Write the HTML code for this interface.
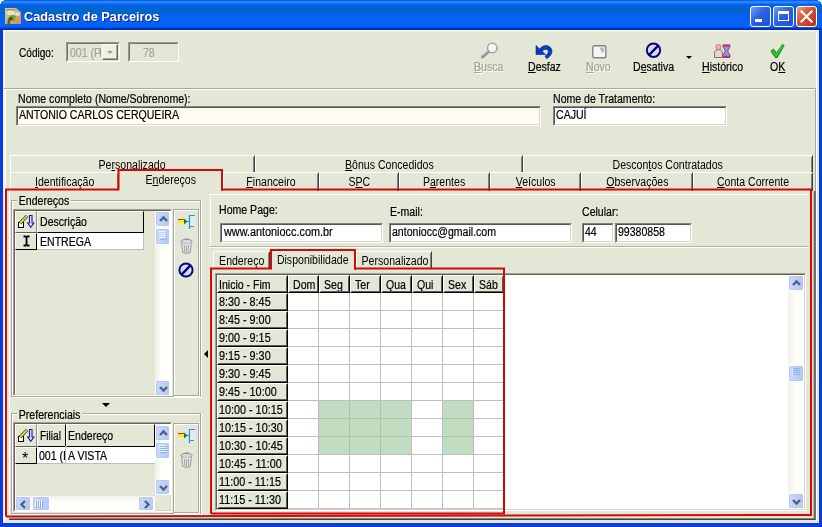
<!DOCTYPE html>
<html lang="pt-BR">
<head>
<meta charset="utf-8">
<title>Cadastro de Parceiros</title>
<style>
html,body{margin:0;padding:0;}
body{width:822px;height:527px;overflow:hidden;position:relative;background:#E5E7D6;
 font-family:"Liberation Sans",sans-serif;font-size:12px;color:#000;}
.a{position:absolute;}
.t{position:absolute;white-space:nowrap;-webkit-text-stroke:.2px currentColor;line-height:14px;height:14px;transform:scaleX(.88);transform-origin:0 0;}
u{text-decoration:underline;text-underline-offset:1px;text-decoration-thickness:1px;}
/* window chrome */
#title{left:0;top:0;width:822px;height:30px;
 background:linear-gradient(#0050DC 0,#1A74F4 1px,#3290FF 2px,#2080FA 3px,#0A62F0 4px,#0660EC 6px,#0066CC 7.5px,#0064C8 12.5px,#0560F0 14.5px,#0662F8 20px,#0660F8 27px,#0038C0 28.5px,#0028A8 30px);}
#title .cap{left:24px;top:8px;font:bold 13.5px "Liberation Sans",sans-serif;color:#fff;-webkit-text-stroke:0;
 text-shadow:1px 1px 0 #0A2A80;line-height:17px;height:17px;transform:scaleX(.945);}
.bl{background:#0A3CD8;}
.wb{top:6px;width:21px;height:21px;border-radius:3px;border:1px solid #fff;box-sizing:border-box;
 background:linear-gradient(135deg,#6C9CF4 0,#2C62E4 45%,#1E4FD0 100%);}
#wclose{background:linear-gradient(135deg,#F0A080 0,#D8502C 45%,#B83010 100%);}
/* inputs */
.in{position:absolute;box-sizing:border-box;background:#fff;border:1px solid;border-color:#848284 #fff #fff #848284;}
.in:before{content:"";position:absolute;left:0;top:0;right:0;bottom:0;border:1px solid;border-color:#55554E #D8D6C8 #D8D6C8 #55554E;}
.in .t{left:2px;top:1px;}
.dis .t{top:3px;}
.dis{background:#E5E7D6;color:#A5A594;border-color:#98978A #fff #fff #98978A;}
.dis:before{border-color:#77766A #E4E2D4 #E4E2D4 #77766A;}
.gray{color:#A5A294;text-shadow:1px 1px 0 #fff;}
/* tabs */
.tab{position:absolute;box-sizing:border-box;height:18px;border-left:1px solid #fff;border-top:1px solid #fff;border-right:1px solid #424142;text-align:center;line-height:14px;white-space:nowrap;}
.tab:after{content:"";position:absolute;right:0;top:1px;bottom:0;width:1px;background:#848284;}
.tab span{display:inline-block;transform:scaleX(.88);transform-origin:50% 0;position:relative;top:2px;}
.hd{position:absolute;box-sizing:border-box;background:#E5E7D6;border:1px solid;border-color:#fff #000 #000 #fff;white-space:nowrap;overflow:hidden;}
.hd:after{content:"";position:absolute;left:0;top:0;right:0;bottom:0;border:1px solid;border-color:transparent #5F5D54 #5F5D54 transparent;}
.hd .t{left:3px;top:2px;}
.hf{position:absolute;box-sizing:border-box;background:#E5E7D6;border:1px solid;border-color:#fff #000 #000 #fff;white-space:nowrap;overflow:hidden;}
.hf .t{left:3px;top:2px;}
.hi{border-right-color:#8E8E80;border-bottom-color:#5E5E52;}
.sb{position:absolute;background:linear-gradient(90deg,#F1F0E8,#FDFDFA 40%,#FEFEFC);}
.sbtn{position:absolute;box-sizing:border-box;width:16px;height:16px;border:1px solid #fff;border-radius:2px;background:linear-gradient(90deg,#CBD9FC,#B4C8F5);box-shadow:0 0 0 1px #B8C8EE inset;}
.grp{position:absolute;box-sizing:border-box;border:1px solid #ACA899;box-shadow:1px 1px 0 #fff, inset 1px 1px 0 #fff;}
.gl{background:#E5E7D6;padding:0 2px;}
.sunk{position:absolute;box-sizing:border-box;border:1px solid;border-color:#A09F90 #fff #fff #A09F90;}
.sunk:before{content:"";position:absolute;left:0;top:0;right:0;bottom:0;border:1px solid;border-color:#65645A #D8D6C8 #D8D6C8 #65645A;}
.ras{position:absolute;box-sizing:border-box;border:1px solid;border-color:#fff #ACA899 #ACA899 #fff;}

.chev{position:absolute;left:0;top:0;}
svg{overflow:visible;}
</style>
</head>
<body>
<!-- title bar -->
<div id="title" class="a">
 <svg class="a" style="left:5px;top:8px" width="16" height="16" viewBox="0 0 16 16"><defs><linearGradient id="ig" x1="0" y1="0" x2="1" y2="1"><stop offset="0" stop-color="#D9D2B4"/><stop offset=".55" stop-color="#BFAE78"/><stop offset="1" stop-color="#C88E50"/></linearGradient></defs><path d="M0 0 H11 L16 4 V16 H0 Z" fill="url(#ig)"/><rect x="1" y="1" width="9" height="1.5" fill="#A87860" opacity=".7"/><ellipse cx="6" cy="5" rx="4" ry="2.4" fill="#EEE8D4" opacity=".9"/><ellipse cx="12.5" cy="6" rx="2.6" ry="2" fill="#E8E4E0" opacity=".85"/><ellipse cx="7.5" cy="10" rx="3.6" ry="3" fill="#6E9A48" opacity=".9"/><path d="M3 10 L5.5 11 L5 16 H2.5 Z" fill="#7A5A18"/><ellipse cx="6" cy="10.5" rx="1.6" ry="1.8" fill="#2F5A24"/><rect x="10" y="9" width="5.5" height="6" fill="#D49A5C" opacity=".8"/></svg>
 <div class="t cap">Cadastro de Parceiros</div>
 <div class="a wb" style="left:750px"><div class="a" style="left:4px;top:12px;width:7px;height:3px;background:#fff"></div></div>
 <div class="a wb" style="left:773px"><div class="a" style="left:4px;top:4px;width:11px;height:10px;box-sizing:border-box;border:1px solid #fff;border-top-width:3px"></div></div>
 <div class="a wb" id="wclose" style="left:796px"><svg class="a" style="left:0;top:0" width="19" height="19" viewBox="0 0 19 19"><path d="M4.5 4.5 L14.5 14.5 M14.5 4.5 L4.5 14.5" stroke="#fff" stroke-width="2.2" stroke-linecap="square"/></svg></div>
</div>
<div class="a bl" style="left:0;top:30px;width:3px;height:497px"></div>
<div class="a" style="left:3px;top:30px;width:1px;height:493px;background:#E4EEFF"></div><div class="a" style="left:4px;top:31px;width:1px;height:490px;background:#FFF8F6"></div><div class="a" style="left:3px;top:30px;width:816px;height:1px;background:#FBFBF4"></div><div class="a" style="left:4px;top:31px;width:814px;height:1px;background:#EEF0E4"></div>
<div class="a bl" style="left:819px;top:30px;width:3px;height:497px"></div>
<div class="a" style="left:816px;top:32px;width:1px;height:489px;background:#fff"></div><div class="a" style="left:817px;top:31px;width:2px;height:492px;background:#D8E9FC"></div>
<div class="a bl" style="left:0;top:523px;width:822px;height:4px"></div>

<div class="a" style="left:0;top:0;width:4px;height:1px;background:#E9F0FB"></div><div class="a" style="left:0;top:1px;width:2px;height:1px;background:#E9F0FB"></div><div class="a" style="left:0;top:2px;width:1px;height:2px;background:#E9F0FB"></div>
<div class="a" style="left:818px;top:0;width:4px;height:1px;background:#E9F0FB"></div><div class="a" style="left:820px;top:1px;width:2px;height:1px;background:#E9F0FB"></div><div class="a" style="left:821px;top:2px;width:1px;height:2px;background:#E9F0FB"></div>
<!-- toolbar -->
<div class="t" style="left:19px;top:46px;transform:scaleX(.84)">Código:</div>
<div class="in dis" style="left:66px;top:42px;width:54px;height:20px"><div class="t" style="left:3px">001 (P</div></div>
<div class="in dis" style="left:128px;top:42px;width:51px;height:20px"><div class="t" style="left:14px">78</div></div>

<div class="t gray" style="left:474px;top:60px"><u>B</u>usca</div>
<div class="t" style="left:528px;top:60px"><u>D</u>esfaz</div>
<div class="t gray" style="left:586px;top:60px"><u>N</u>ovo</div>
<div class="t" style="left:633px;top:60px">D<u>e</u>sativa</div>
<div class="t" style="left:702px;top:60px"><u>H</u>istórico</div>
<div class="t" style="left:770px;top:60px">O<u>K</u></div>

<!-- toolbar icons -->
<svg class="a" style="left:480px;top:42px" width="18" height="17" viewBox="0 0 18 17"><path d="M8.5 9.5 L2.5 15" stroke="#8C8C8C" stroke-width="3" stroke-linecap="round"/><path d="M8 9 L2.5 14" stroke="#C8C8C8" stroke-width="1"/><circle cx="12.3" cy="6" r="4.8" fill="#F4F4F4" stroke="#9A9A9A" stroke-width="1.3"/><path d="M9.5 4.5 A3.3 3.3 0 0 1 13 2.8" stroke="#fff" stroke-width="1.2" fill="none"/></svg>
<svg class="a" style="left:535px;top:44px" width="18" height="16" viewBox="0 0 18 16"><path d="M1 1.5 L1 10.5 L10.5 10.5 L7.3 7.6 C8.5 5.6 11 4.6 12.6 6 C14 7.4 13.4 9.6 10 12.2 L11.6 14.8 C17 11.6 18.4 7 15.6 3.6 C12.6 0.2 7.4 1.2 4.6 4.9 Z" fill="#0A3CC0" stroke="#06288A" stroke-width=".6"/></svg>
<svg class="a" style="left:592px;top:45px" width="15" height="14" viewBox="0 0 15 14"><rect x=".8" y=".8" width="13" height="12" rx="1.5" fill="#F6F6F6" stroke="#848484" stroke-width="1.4"/><path d="M7.5 2.5 H12 V7 L10 8 Z" fill="#B8B8B8"/></svg>
<svg class="a" style="left:645px;top:42px" width="17" height="17" viewBox="0 0 17 17"><circle cx="8.5" cy="8.3" r="6.7" fill="#DADAF2" stroke="#06067E" stroke-width="2"/><path d="M4 13 L13 3.8" stroke="#06067E" stroke-width="2.4"/></svg>
<div class="a" style="left:686px;top:56px;width:0;height:0;border-left:3px solid transparent;border-right:3px solid transparent;border-top:3px solid #000"></div>
<svg class="a" style="left:714px;top:44px" width="17" height="15" viewBox="0 0 17 15"><circle cx="4.5" cy="3" r="2.6" fill="#F0B8A8" stroke="#C06878" stroke-width=".8"/><path d="M.6 13.5 V9 C.6 6.4 2.4 5.6 4.5 5.6 C6.6 5.6 8.4 6.4 8.4 9 V13.5 Z" fill="#CFE6C6" stroke="#B83C78" stroke-width=".9"/><path d="M9 1 H16 V3 L13.6 7 L16 11 V13.5 H9 V11 L11.4 7 L9 3 Z" fill="#7C9CE8" stroke="#B03070" stroke-width=".9"/><rect x="9" y=".6" width="7" height="2" fill="#C0306C"/><rect x="9" y="11.8" width="7" height="2" fill="#C0306C"/></svg>
<svg class="a" style="left:770px;top:44px" width="15" height="14" viewBox="0 0 15 14"><path d="M.8 7 L3.6 5 L6.4 9 L12.4 .4 L14.2 1.6 L7.2 13.8 L5.4 13.8 Z" fill="#22A822" stroke="#138013" stroke-width=".7"/><path d="M2.6 6.8 L6.2 11.4 L12.6 1.8" stroke="#58D858" stroke-width="1" fill="none"/></svg>
<!-- combo button -->
<div class="a" style="left:100px;top:48px;width:1px;height:9px;background:#A5A594"></div>
<div class="a" style="left:102px;top:44px;width:16px;height:16px;box-sizing:border-box;background:#EEF0E4;border:1px solid;border-color:#fff #6E6C5C #6E6C5C #fff;box-shadow:inset -1px -1px 0 #ACA899"></div>
<div class="a" style="left:107px;top:51px;width:0;height:0;border-left:3px solid transparent;border-right:3px solid transparent;border-top:3px solid #A0A090"></div>
<!-- main panel -->
<div class="a" style="left:4px;top:88px;width:812px;height:1px;background:#ACA899"></div>
<div class="a" style="left:5px;top:89px;width:811px;height:1px;background:#fff"></div>
<div class="a" style="left:5px;top:89px;width:1px;height:431px;background:#fff"></div>
<div class="a" style="left:815px;top:89px;width:1px;height:431px;background:#ACA899"></div>
<div class="t" style="left:18px;top:92px">Nome completo (Nome/Sobrenome):</div>
<div class="in" style="left:16px;top:106px;width:525px;height:20px;background:#FFFBF0"><div class="t">ANTONIO CARLOS CERQUEIRA</div></div>
<div class="t" style="left:553px;top:92px">Nome de Tratamento:</div>
<div class="in" style="left:553px;top:106px;width:174px;height:20px"><div class="t">CAJUÍ</div></div>

<!-- tabs row 1 -->
<div class="tab" style="left:10px;top:155px;width:245px"><span>Pe<u>r</u>sonalizado</span></div>
<div class="tab" style="left:255px;top:155px;width:268px"><span><u>B</u>ônus Concedidos</span></div>
<div class="tab" style="left:523px;top:155px;width:290px"><span>Descon<u>t</u>os Contratados</span></div>
<!-- tabs row 2 -->
<div class="tab" style="left:10px;top:172px;width:109px;height:19px"><span><u>I</u>dentificação</span></div>
<div class="tab" style="left:118px;top:170px;width:105px;height:21px;background:#E5E7D6"><span>E<u>n</u>dereços</span></div>
<div class="tab" style="left:223px;top:172px;width:96px;height:19px"><span><u>F</u>inanceiro</span></div>
<div class="tab" style="left:319px;top:172px;width:80px;height:19px"><span>S<u>P</u>C</span></div>
<div class="tab" style="left:399px;top:172px;width:91px;height:19px"><span>P<u>a</u>rentes</span></div>
<div class="tab" style="left:490px;top:172px;width:91px;height:19px"><span><u>V</u>eículos</span></div>
<div class="tab" style="left:581px;top:172px;width:112px;height:19px"><span><u>O</u>bservações</span></div>
<div class="tab" style="left:693px;top:172px;width:120px;height:19px"><span><u>C</u>onta Corrente</span></div>
<!-- tab page body -->
<div class="a" style="left:15px;top:250px;width:1px;height:145px;background:#fff"></div><div class="a" style="left:15px;top:464px;width:1px;height:31px;background:#fff"></div>
<div class="a" style="left:813px;top:191px;width:1px;height:328px;background:#B5B2A2"></div><div class="a" style="left:814px;top:191px;width:1px;height:329px;background:#6E6C60"></div>
<div class="a" style="left:815px;top:191px;width:1px;height:329px;background:#77756A"></div>
<div class="a" style="left:9px;top:518px;width:805px;height:1px;background:#848284"></div>
<div class="a" style="left:9px;top:519px;width:806px;height:1px;background:#424142"></div>
<div class="a" style="left:9px;top:191px;width:1px;height:327px;background:#fff"></div>
<div class="grp" style="left:11px;top:200px;width:190px;height:197px"></div>
<div class="t gl" style="left:17px;top:194px">Endereços</div>
<div class="sunk" style="left:13px;top:209px;width:159px;height:187px"></div>
<div class="hf hi" style="left:15px;top:211px;width:22px;height:22px"></div>
<div class="hf" style="left:37px;top:211px;width:107px;height:22px"><div class="t" style="left:2px;top:3px">Descrição</div></div>
<div class="hf" style="left:15px;top:233px;width:22px;height:17px"></div>
<div class="a" style="left:37px;top:233px;width:106px;height:16px;background:#fff"></div>
<div class="a" style="left:37px;top:249px;width:107px;height:1px;background:#BEBEBE"></div>
<div class="a" style="left:143px;top:233px;width:1px;height:17px;background:#BEBEBE"></div>
<div class="t" style="left:40px;top:235px">ENTREGA</div>
<div class="sb" style="left:155px;top:211px;width:16px;height:184px"></div>
<div class="sbtn" style="left:155px;top:211px;width:15px"><svg class="a" style="left:-.5px;top:-.5px" width="15" height="15" viewBox="0 0 15 15"><path d="M4 9 L7.5 5.5 L11 9" stroke="#4D6185" stroke-width="2.3" fill="none"/></svg></div>
<div class="sbtn" style="left:155px;top:228px;width:15px;height:17px"><svg class="a" style="left:0;top:0" width="13" height="15"><rect x="3" y="2" width="7" height="1" fill="#EEF4FE"/><rect x="4" y="4" width="7" height="1" fill="#8CB0F8"/><rect x="3" y="4" width="7" height="1" fill="#EEF4FE"/><rect x="4" y="6" width="7" height="1" fill="#8CB0F8"/><rect x="3" y="6" width="7" height="1" fill="#EEF4FE"/><rect x="4" y="8" width="7" height="1" fill="#8CB0F8"/><rect x="3" y="8" width="7" height="1" fill="#EEF4FE"/><rect x="4" y="10" width="7" height="1" fill="#8CB0F8"/></svg></div>
<div class="sbtn" style="left:155px;top:380px;width:15px"><svg class="a" style="left:-.5px;top:-.5px" width="15" height="15" viewBox="0 0 15 15"><path d="M4 6 L7.5 9.5 L11 6" stroke="#4D6185" stroke-width="2.3" fill="none"/></svg></div>
<div class="grp" style="left:173px;top:209px;width:26px;height:187px"></div>
<div class="a" style="left:102px;top:403px;width:0;height:0;border-left:4px solid transparent;border-right:4px solid transparent;border-top:4px solid #000"></div>
<div class="a" style="left:204px;top:350px;width:0;height:0;border-top:4px solid transparent;border-bottom:4px solid transparent;border-right:4px solid #000"></div>
<div class="grp" style="left:11px;top:413px;width:190px;height:101px"></div>
<div class="t gl" style="left:17px;top:408px">Preferenciais</div>
<div class="sunk" style="left:13px;top:422px;width:159px;height:90px"></div>
<div class="hf hi" style="left:15px;top:424px;width:22px;height:23px"></div>
<div class="hf" style="left:37px;top:424px;width:29px;height:23px"><div class="t" style="left:2px;top:4px;transform:scaleX(.85)">Filial</div></div>
<div class="hf" style="left:66px;top:424px;width:89px;height:23px"><div class="t" style="left:1px;top:4px">Endereço</div></div>
<div class="hf" style="left:15px;top:447px;width:22px;height:17px"><div class="t" style="left:6px;top:3px;font-size:16px;line-height:16px;height:16px;transform:none;-webkit-text-stroke:0">*</div></div>
<div class="a" style="left:37px;top:447px;width:118px;height:16px;background:#fff"></div>
<div class="a" style="left:37px;top:463px;width:118px;height:1px;background:#BEBEBE"></div>
<div class="a" style="left:65px;top:446px;width:1px;height:18px;background:#BEBEBE"></div>
<div class="t" style="left:39px;top:449px">001 (I</div>
<div class="t" style="left:68px;top:449px">A VISTA</div>
<div class="sb" style="left:155px;top:424px;width:16px;height:71px"></div>
<div class="sbtn" style="left:155px;top:425px;width:15px"><svg class="a" style="left:-.5px;top:-.5px" width="15" height="15" viewBox="0 0 15 15"><path d="M4 9 L7.5 5.5 L11 9" stroke="#4D6185" stroke-width="2.3" fill="none"/></svg></div>
<div class="sbtn" style="left:155px;top:442px;width:15px;height:17px"><svg class="a" style="left:0;top:0" width="13" height="14"><rect x="3" y="2" width="7" height="1" fill="#EEF4FE"/><rect x="4" y="3" width="7" height="1" fill="#8CB0F8"/><rect x="3" y="4" width="7" height="1" fill="#EEF4FE"/><rect x="4" y="5" width="7" height="1" fill="#8CB0F8"/><rect x="3" y="6" width="7" height="1" fill="#EEF4FE"/><rect x="4" y="7" width="7" height="1" fill="#8CB0F8"/><rect x="3" y="8" width="7" height="1" fill="#EEF4FE"/><rect x="4" y="9" width="7" height="1" fill="#8CB0F8"/></svg></div>
<div class="sbtn" style="left:155px;top:479px;width:15px"><svg class="a" style="left:-.5px;top:-.5px" width="15" height="15" viewBox="0 0 15 15"><path d="M4 6 L7.5 9.5 L11 6" stroke="#4D6185" stroke-width="2.3" fill="none"/></svg></div>
<div class="sb" style="left:15px;top:496px;width:140px;height:15px;background:linear-gradient(#F1F0E8,#FDFDFA 40%,#FEFEFC)"></div>
<div class="sbtn" style="left:15px;top:496px;height:15px"><svg class="a" style="left:-.5px;top:-.5px" width="15" height="15" viewBox="0 0 15 15"><path d="M9 4 L5.5 7.5 L9 11" stroke="#4D6185" stroke-width="2.3" fill="none"/></svg></div>
<div class="sbtn" style="left:32px;top:496px;height:15px;width:18px"><svg class="a" style="left:0;top:0" width="14" height="13"><rect y="3" x="2" height="7" width="1" fill="#EEF4FE"/><rect y="4" x="3" height="7" width="1" fill="#8CB0F8"/><rect y="3" x="4" height="7" width="1" fill="#EEF4FE"/><rect y="4" x="5" height="7" width="1" fill="#8CB0F8"/><rect y="3" x="6" height="7" width="1" fill="#EEF4FE"/><rect y="4" x="7" height="7" width="1" fill="#8CB0F8"/><rect y="3" x="8" height="7" width="1" fill="#EEF4FE"/><rect y="4" x="9" height="7" width="1" fill="#8CB0F8"/></svg></div>
<div class="sbtn" style="left:138px;top:496px;height:15px"><svg class="a" style="left:-.5px;top:-.5px" width="15" height="15" viewBox="0 0 15 15"><path d="M6 4 L9.5 7.5 L6 11" stroke="#4D6185" stroke-width="2.3" fill="none"/></svg></div>
<div class="grp" style="left:173px;top:423px;width:26px;height:90px"></div>
<div class="a" style="left:209px;top:194px;width:600px;height:1px;background:#fff"></div>
<div class="a" style="left:210px;top:194px;width:1px;height:52px;background:#fff"></div>
<div class="a" style="left:209px;top:246px;width:600px;height:1px;background:#B8B6A4"></div>
<div class="a" style="left:209px;top:247px;width:600px;height:1px;background:#fff"></div>
<div class="t" style="left:219px;top:203px">Home Page:</div>
<div class="in" style="left:220px;top:223px;width:163px;height:20px"><div class="t" style="left:3px;transform:scaleX(.905)">www.antoniocc.com.br</div></div>
<div class="t" style="left:390px;top:205px">E-mail:</div>
<div class="in" style="left:389px;top:223px;width:183px;height:20px"><div class="t">antoniocc@gmail.com</div></div>
<div class="t" style="left:582px;top:205px">Celular:</div>
<div class="in" style="left:582px;top:223px;width:32px;height:20px"><div class="t">44</div></div>
<div class="in" style="left:615px;top:223px;width:77px;height:20px"><div class="t">99380858</div></div>
<div class="tab" style="left:213px;top:251px;width:57px;height:18px"><span>Endereço</span></div>
<div class="tab" style="left:270px;top:250px;width:86px;height:20px;background:#E5E7D6"><span>Disponibilidade</span></div>
<div class="tab" style="left:356px;top:251px;width:76px;height:18px"><span>Personalizado</span></div>
<div class="sunk" style="left:215px;top:273px;width:591px;height:238px;background:#fff"></div>

<div class="a" style="left:319px;top:401px;width:92px;height:53px;background:#C1DCC1"></div>
<div class="a" style="left:443px;top:401px;width:30px;height:53px;background:#C1DCC1"></div>
<div class="a" style="left:318px;top:292px;width:1px;height:217px;background:#BEBEBE"></div>
<div class="a" style="left:349px;top:292px;width:1px;height:217px;background:#BEBEBE"></div>
<div class="a" style="left:380px;top:292px;width:1px;height:217px;background:#BEBEBE"></div>
<div class="a" style="left:411px;top:292px;width:1px;height:217px;background:#BEBEBE"></div>
<div class="a" style="left:442px;top:292px;width:1px;height:217px;background:#BEBEBE"></div>
<div class="a" style="left:473px;top:292px;width:1px;height:217px;background:#BEBEBE"></div>
<div class="a" style="left:503px;top:292px;width:1px;height:217px;background:#BEBEBE"></div>
<div class="a" style="left:288px;top:310px;width:216px;height:1px;background:#BEBEBE"></div>
<div class="a" style="left:288px;top:328px;width:216px;height:1px;background:#BEBEBE"></div>
<div class="a" style="left:288px;top:346px;width:216px;height:1px;background:#BEBEBE"></div>
<div class="a" style="left:288px;top:364px;width:216px;height:1px;background:#BEBEBE"></div>
<div class="a" style="left:288px;top:382px;width:216px;height:1px;background:#BEBEBE"></div>
<div class="a" style="left:288px;top:400px;width:216px;height:1px;background:#BEBEBE"></div>
<div class="a" style="left:288px;top:418px;width:216px;height:1px;background:#BEBEBE"></div>
<div class="a" style="left:288px;top:436px;width:216px;height:1px;background:#BEBEBE"></div>
<div class="a" style="left:288px;top:454px;width:216px;height:1px;background:#BEBEBE"></div>
<div class="a" style="left:288px;top:472px;width:216px;height:1px;background:#BEBEBE"></div>
<div class="a" style="left:288px;top:490px;width:216px;height:1px;background:#BEBEBE"></div>
<div class="a" style="left:288px;top:508px;width:216px;height:1px;background:#BEBEBE"></div>
<div class="a" style="left:349px;top:401px;width:1px;height:53px;background:#A9C6A9"></div>
<div class="a" style="left:380px;top:401px;width:1px;height:53px;background:#A9C6A9"></div>
<div class="a" style="left:319px;top:418px;width:92px;height:1px;background:#A9C6A9"></div>
<div class="a" style="left:443px;top:418px;width:30px;height:1px;background:#A9C6A9"></div>
<div class="a" style="left:319px;top:436px;width:92px;height:1px;background:#A9C6A9"></div>
<div class="a" style="left:443px;top:436px;width:30px;height:1px;background:#A9C6A9"></div>
<div class="hd" style="left:217px;top:275px;width:71px;height:18px"><div class="t" style="left:1px">Inicio - Fim</div></div>
<div class="hd" style="left:288px;top:275px;width:31px;height:18px"><div class="t" style="left:4px">Dom</div></div>
<div class="hd" style="left:319px;top:275px;width:31px;height:18px"><div class="t" style="left:4px">Seg</div></div>
<div class="hd" style="left:350px;top:275px;width:31px;height:18px"><div class="t" style="left:4px">Ter</div></div>
<div class="hd" style="left:381px;top:275px;width:31px;height:18px"><div class="t" style="left:4px">Qua</div></div>
<div class="hd" style="left:412px;top:275px;width:31px;height:18px"><div class="t" style="left:4px">Qui</div></div>
<div class="hd" style="left:443px;top:275px;width:31px;height:18px"><div class="t" style="left:4px">Sex</div></div>
<div class="hd" style="left:474px;top:275px;width:30px;height:18px"><div class="t" style="left:4px">Sáb</div></div>
<div class="hd" style="left:217px;top:293px;width:71px;height:18px"><div class="t" style="left:1px;top:1px;transform:scaleX(.9)">8:30 - 8:45</div></div>
<div class="hd" style="left:217px;top:311px;width:71px;height:18px"><div class="t" style="left:1px;top:1px;transform:scaleX(.9)">8:45 - 9:00</div></div>
<div class="hd" style="left:217px;top:329px;width:71px;height:18px"><div class="t" style="left:1px;top:1px;transform:scaleX(.9)">9:00 - 9:15</div></div>
<div class="hd" style="left:217px;top:347px;width:71px;height:18px"><div class="t" style="left:1px;top:1px;transform:scaleX(.9)">9:15 - 9:30</div></div>
<div class="hd" style="left:217px;top:365px;width:71px;height:18px"><div class="t" style="left:1px;top:1px;transform:scaleX(.9)">9:30 - 9:45</div></div>
<div class="hd" style="left:217px;top:383px;width:71px;height:18px"><div class="t" style="left:1px;top:1px;transform:scaleX(.9)">9:45 - 10:00</div></div>
<div class="hd" style="left:217px;top:401px;width:71px;height:18px"><div class="t" style="left:1px;top:1px;transform:scaleX(.9)">10:00 - 10:15</div></div>
<div class="hd" style="left:217px;top:419px;width:71px;height:18px"><div class="t" style="left:1px;top:1px;transform:scaleX(.9)">10:15 - 10:30</div></div>
<div class="hd" style="left:217px;top:437px;width:71px;height:18px"><div class="t" style="left:1px;top:1px;transform:scaleX(.9)">10:30 - 10:45</div></div>
<div class="hd" style="left:217px;top:455px;width:71px;height:18px"><div class="t" style="left:1px;top:1px;transform:scaleX(.9)">10:45 - 11:00</div></div>
<div class="hd" style="left:217px;top:473px;width:71px;height:18px"><div class="t" style="left:1px;top:1px;transform:scaleX(.9)">11:00 - 11:15</div></div>
<div class="hd" style="left:217px;top:491px;width:71px;height:18px"><div class="t" style="left:1px;top:1px;transform:scaleX(.9)">11:15 - 11:30</div></div>
<div class="sb" style="left:788px;top:275px;width:16px;height:234px"></div>
<div class="sbtn" style="left:788px;top:275px"><svg class="a" style="left:-.5px;top:-.5px" width="15" height="15" viewBox="0 0 15 15"><path d="M4 9 L7.5 5.5 L11 9" stroke="#4D6185" stroke-width="2.3" fill="none"/></svg></div>
<div class="sbtn" style="left:788px;top:365px;height:17px"><svg class="a" style="left:0;top:0" width="13" height="13"><rect x="3" y="2" width="7" height="1" fill="#EEF4FE"/><rect x="4" y="2" width="7" height="1" fill="#8CB0F8"/><rect x="3" y="4" width="7" height="1" fill="#EEF4FE"/><rect x="4" y="4" width="7" height="1" fill="#8CB0F8"/><rect x="3" y="6" width="7" height="1" fill="#EEF4FE"/><rect x="4" y="6" width="7" height="1" fill="#8CB0F8"/><rect x="3" y="8" width="7" height="1" fill="#EEF4FE"/><rect x="4" y="8" width="7" height="1" fill="#8CB0F8"/></svg></div>
<div class="sbtn" style="left:788px;top:493px"><svg class="a" style="left:-.5px;top:-.5px" width="15" height="15" viewBox="0 0 15 15"><path d="M4 6 L7.5 9.5 L11 6" stroke="#4D6185" stroke-width="2.3" fill="none"/></svg></div>
<svg class="a" style="left:178px;top:215px" width="17" height="14" viewBox="0 0 17 14"><rect x="0" y="4" width="6" height="4" fill="#F4EC20"/><rect x="0" y="4" width="6" height="1" fill="#E02020"/><path d="M6 3.5 L9.5 6.5 L6 9.5 Z" fill="#108020"/><rect x="12" y="1" width="5" height="10" fill="#DCEEFA"/><path d="M11.5 0 V14 M11.5 .5 H17 M11.5 6.5 H9 M11.5 11.5 H16" stroke="#3090C8" stroke-width="1.2" fill="none"/></svg>
<svg class="a" style="left:180px;top:238px" width="13" height="16" viewBox="0 0 13 16"><ellipse cx="6.5" cy="3.6" rx="5.6" ry="2.2" fill="#D8D8D8" stroke="#8E8E8E" stroke-width="1"/><path d="M4.5 1.5 Q6.5 -.5 8.5 1.5" stroke="#8E8E8E" fill="none"/><path d="M1.6 5.5 L2.8 14.5 Q6.5 16.2 10.2 14.5 L11.4 5.5" fill="#E4E4E4" stroke="#9A9A9A" stroke-width="1"/><path d="M4.4 7 L4.8 14 M6.5 7.2 V14.4 M8.6 7 L8.2 14" stroke="#A8A8A8" stroke-width="1"/></svg>
<svg class="a" style="left:178px;top:262px" width="16" height="16" viewBox="0 0 16 16"><circle cx="8" cy="8" r="6.6" fill="#DADAF2" stroke="#06067E" stroke-width="2"/><path d="M3.6 12.6 L12.4 3.4" stroke="#06067E" stroke-width="2.4"/></svg>
<svg class="a" style="left:178px;top:429px" width="17" height="14" viewBox="0 0 17 14"><rect x="0" y="4" width="6" height="4" fill="#F4EC20"/><rect x="0" y="4" width="6" height="1" fill="#E02020"/><path d="M6 3.5 L9.5 6.5 L6 9.5 Z" fill="#108020"/><rect x="12" y="1" width="5" height="10" fill="#DCEEFA"/><path d="M11.5 0 V14 M11.5 .5 H17 M11.5 6.5 H9 M11.5 11.5 H16" stroke="#3090C8" stroke-width="1.2" fill="none"/></svg>
<svg class="a" style="left:180px;top:452px" width="13" height="16" viewBox="0 0 13 16"><ellipse cx="6.5" cy="3.6" rx="5.6" ry="2.2" fill="#D8D8D8" stroke="#8E8E8E" stroke-width="1"/><path d="M4.5 1.5 Q6.5 -.5 8.5 1.5" stroke="#8E8E8E" fill="none"/><path d="M1.6 5.5 L2.8 14.5 Q6.5 16.2 10.2 14.5 L11.4 5.5" fill="#E4E4E4" stroke="#9A9A9A" stroke-width="1"/><path d="M4.4 7 L4.8 14 M6.5 7.2 V14.4 M8.6 7 L8.2 14" stroke="#A8A8A8" stroke-width="1"/></svg>
<svg class="a" style="left:18px;top:215px" width="16" height="13" viewBox="0 0 16 13"><rect x=".5" y="7.5" width="5" height="5" fill="#fff" stroke="#000" stroke-width="1"/><path d="M2 8.2 L9 1" stroke="#2C2C00" stroke-width="3.2"/><path d="M2.2 8 L8.8 1.2" stroke="#DEDA4C" stroke-width="1.8"/><path d="M11.5 .5 H14 V8 H15.8 L12.75 12.4 L9.7 8 H11.5 Z" fill="#E4EAFF" stroke="#1A1A90" stroke-width="1.1"/></svg>
<svg class="a" style="left:18px;top:429px" width="16" height="13" viewBox="0 0 16 13"><rect x=".5" y="7.5" width="5" height="5" fill="#fff" stroke="#000" stroke-width="1"/><path d="M2 8.2 L9 1" stroke="#2C2C00" stroke-width="3.2"/><path d="M2.2 8 L8.8 1.2" stroke="#DEDA4C" stroke-width="1.8"/><path d="M11.5 .5 H14 V8 H15.8 L12.75 12.4 L9.7 8 H11.5 Z" fill="#E4EAFF" stroke="#1A1A90" stroke-width="1.1"/></svg>
<svg class="a" style="left:23px;top:236px" width="7" height="10" viewBox="0 0 7 10"><path d="M0.5 .5 H2.5 L3.5 1.2 L4.5 .5 H6.5 M3.5 1 V9 M.5 9.5 H2.5 L3.5 8.8 L4.5 9.5 H6.5" stroke="#000" stroke-width="1.8" fill="none"/></svg>
<svg class="a" style="left:0;top:0" width="822" height="527" viewBox="0 0 822 527" fill="none" stroke="#D40808" stroke-width="2" stroke-linejoin="miter"><polyline points="6,516.5 6,189.5 118.5,189.5 118.5,170 222,170 222,189.5 811,189.5 811,515 6,516.5"/><polyline points="211,513.5 211,268.5 271,268.5 271,250 355,250 355,268.5 504,268.5 504,513.5 211,513.5"/></svg>
</body>
</html>
